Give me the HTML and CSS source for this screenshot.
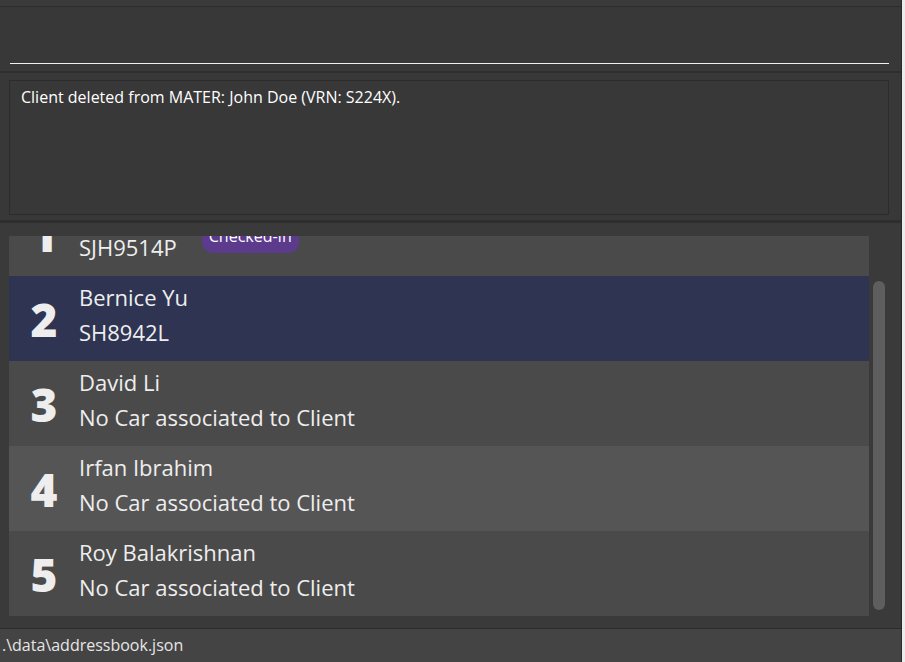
FILE: index.html
```html
<!DOCTYPE html>
<html lang="en">
<head>
<meta charset="utf-8">
<title>MATER</title>
<link rel="stylesheet" href="styles.css">
</head>
<body>
<div class="screen">
  <div class="app">
    <div class="menu-stub"></div>
    <div class="command-section">
      <div class="command-field"></div>
    </div>
    <div class="result-section">
      <div class="result-box">Client deleted from MATER: John Doe (VRN: S224X).</div>
    </div>
    <div class="list-section">
      <div class="list-viewport">
        <div class="list">
          <div class="cell">
            <div class="cell-index">1</div>
            <div class="cell-text">
              <div class="cell-name">Alex Yeoh</div>
              <div class="cell-line">
                <span class="cell-vrn">SJH9514P</span>
                <span class="badge">Checked-In</span>
              </div>
            </div>
          </div>
          <div class="cell selected">
            <div class="cell-index">2</div>
            <div class="cell-text">
              <div class="cell-name">Bernice Yu</div>
              <div class="cell-line"><span class="cell-vrn">SH8942L</span></div>
            </div>
          </div>
          <div class="cell">
            <div class="cell-index">3</div>
            <div class="cell-text">
              <div class="cell-name">David Li</div>
              <div class="cell-line"><span class="cell-vrn">No Car associated to Client</span></div>
            </div>
          </div>
          <div class="cell alt">
            <div class="cell-index">4</div>
            <div class="cell-text">
              <div class="cell-name">Irfan Ibrahim</div>
              <div class="cell-line"><span class="cell-vrn">No Car associated to Client</span></div>
            </div>
          </div>
          <div class="cell">
            <div class="cell-index">5</div>
            <div class="cell-text">
              <div class="cell-name">Roy Balakrishnan</div>
              <div class="cell-line"><span class="cell-vrn">No Car associated to Client</span></div>
            </div>
          </div>
        </div>
      </div>
      <div class="scroll-track">
        <div class="scroll-thumb"></div>
      </div>
    </div>
    <div class="status-bar">.\data\addressbook.json</div>
  </div>
  <div class="behind"></div>
</div>
</body>
</html>
```

FILE: styles.css
```css
* { box-sizing: border-box; }

html, body {
  margin: 0;
  padding: 0;
  width: 905px;
  height: 662px;
  overflow: hidden;
  background: #f2f2f2;
  font-family: "Open Sans", "Noto Sans", sans-serif;
}

.screen {
  display: flex;
  width: 905px;
  height: 662px;
}

.app {
  width: 902px;
  height: 662px;
  display: flex;
  flex-direction: column;
  background: #3a3a3a;
  border-right: 1px solid #2a2a2a;
}

.behind {
  flex: 1;
  background: #ececec;
}

.menu-stub {
  height: 7px;
  flex: none;
  background: #3a3a3a;
  border-bottom: 1px solid #2c2c2c;
}

.command-section {
  height: 66px;
  flex: none;
  padding: 0 12px 0 10px;
  background: #383838;
  border-bottom: 2px solid #2e2e2e;
  display: flex;
  align-items: flex-end;
}

.command-field {
  width: 879px;
  height: 8px;
  border-bottom: 1px solid #f0f0f0;
  margin-bottom: 7px;
}

.result-section {
  height: 150px;
  flex: none;
  padding: 7px 12px 0 9px;
  background: #383838;
  border-bottom: 3px solid #2e2e2e;
}

.result-box {
  width: 880px;
  height: 135px;
  border: 1px solid #2c2c2c;
  background: #383838;
  padding: 6px 11px;
  color: #ffffff;
  font-size: 16px;
  line-height: 20px;
}

.list-section {
  flex: none;
  height: 406px;
  padding: 13px 0 0 9px;
  display: flex;
  background: #3a3a3a;
  border-bottom: 1px solid #2c2c2c;
}

.list-viewport {
  width: 860px;
  height: 380px;
  overflow: hidden;
}

.list {
  margin-top: -45px;
}

.cell {
  height: 85px;
  display: flex;
  background: #4a4a4a;
  color: #eeeeee;
}

.cell.alt { background: #555555; }
.cell.selected { background: #2e3452; }

.cell-index {
  width: 70px;
  flex: none;
  align-self: center;
  text-align: center;
  font-family: "Open Sans", "Roboto", sans-serif;
  font-weight: 800;
  font-size: 46px;
  line-height: 46px;
  color: #eeeeee;
}

.cell-text {
  padding-top: 4px;
  font-size: 22px;
  line-height: 35px;
}

.cell-line {
  display: flex;
  align-items: flex-start;
}

.badge {
  margin-left: 25px;
  margin-top: -9px;
  background: #5c3b8c;
  color: #ffffff;
  font-size: 16px;
  line-height: 20px;
  padding: 5px 7px 7px;
  border-radius: 11px;
}

.scroll-track {
  width: 12px;
  margin-left: 4px;
  padding-top: 45px;
}

.scroll-thumb {
  width: 12px;
  height: 329px;
  background: #5e5e5e;
  border-radius: 6px;
}

.status-bar {
  flex: 1;
  background: #444444;
  color: #e6e6e6;
  font-size: 16px;
  line-height: 33px;
  padding-left: 2px;
}
```
